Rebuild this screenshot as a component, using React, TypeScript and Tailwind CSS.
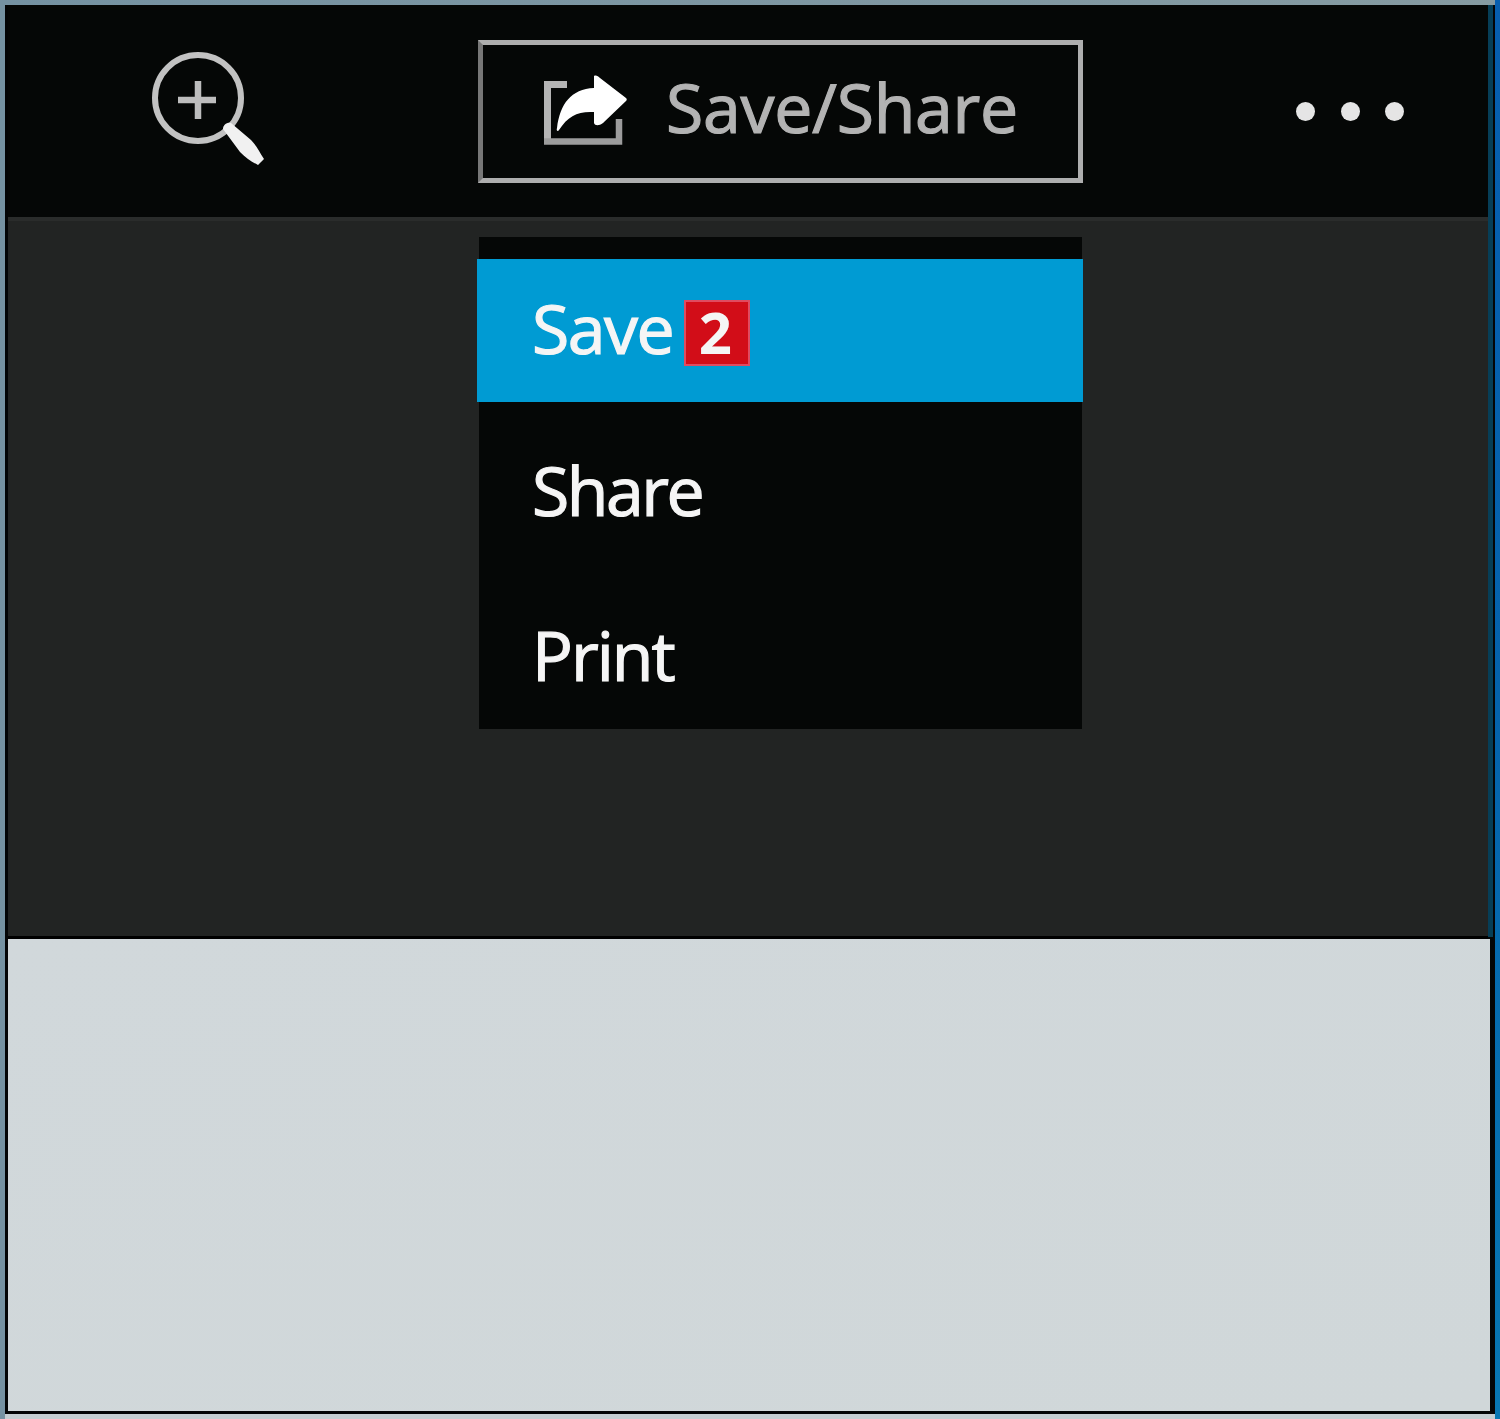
import React, { useState } from 'react';

const menuItems = [
  { label: 'Save', badge: '2', row: 'h-[143px] pb-[6px] tracking-[-1.500px]' },
  { label: 'Share', row: 'h-[163px] pt-[12px] tracking-[-2.500px]' },
  { label: 'Print', row: 'h-[164px] pt-[16px] tracking-[-2px]' },
];

function ZoomIcon() {
  return (
    <svg width="116" height="118" viewBox="0 0 116 118" fill="none">
      <circle cx="48" cy="48" r="43" stroke="#c2c2c2" strokeWidth="6" />
      <path d="M48 31v38M28 50h38" stroke="#bdbdbd" strokeWidth="6.500" />
      <path d="M73 79c0-4 4-7 8-6l20 17c5 5 8 11 13 19l-6 6c-6-3-12-7-18-13z" fill="#f1f1f1" />
    </svg>
  );
}

function ShareIcon() {
  return (
    <svg width="88" height="74" viewBox="0 0 88 74" fill="none">
      <path d="M26 9.500H6.500v57" stroke="#b4b4b4" strokeWidth="7" />
      <path d="M3 66.500h75V44" stroke="#9c9c9c" strokeWidth="6.500" />
      <path
        d="M53 1c2-1 4 0 6 2l26 20c1 1 1 2 0 3L62 48c-4 3-8 3-9 0V37c-16-1-26 4-35 18-1 2-3 1-2-2 3-24 14-39 37-40z"
        fill="#fff"
      />
    </svg>
  );
}

function Toolbar({ onToggle }: { onToggle: () => void }) {
  return (
    <header className="h-[212px] flex-shrink-0 bg-[#050706] flex items-start">
      <button className="ml-[142px] mt-[45px]">
        <ZoomIcon />
      </button>
      <button
        onClick={onToggle}
        className="ml-[212px] mt-[35px] w-[605px] h-[143px] flex items-center border-[5px] border-[#aeaeae] border-l-[#777]"
      >
        <span className="ml-[58px]">
          <ShareIcon />
        </span>
        <span className="ml-[37px] mb-[9px] text-[68px] leading-none tracking-[-0.300px] text-[#b3b3b3] [-webkit-text-stroke:1.200px_#b3b3b3]">
          Save/Share
        </span>
      </button>
      <button className="ml-[213px] mt-[97px] flex gap-[25.500px]">
        <span className="size-[19px] rounded-full bg-[#e5e5e5]" />
        <span className="size-[19px] rounded-full bg-[#e5e5e5]" />
        <span className="size-[19px] rounded-full bg-[#e5e5e5]" />
      </button>
    </header>
  );
}

function Menu({ activeIndex, onSelect }: { activeIndex: number, onSelect: (idx: number) => void }) {
  return (
    <nav className="ml-[471px] mt-[16px] w-[603px] h-[492px] pt-[22px] bg-[#050706] flex flex-col">
      {menuItems.map((item, idx) => (
        <button
          key={item.label}
          onClick={() => onSelect(idx)}
          className={`-ml-[2px] -mr-px pl-[55px] flex flex-shrink-0 items-center text-[68px] leading-none text-[#f5f5f5] ${item.row} ${
            activeIndex === idx ? 'bg-[#009bd3]' : ''
          }`}
        >
          <span className="[-webkit-text-stroke:1.200px_#f5f5f5]">{item.label}</span>
          {item.badge && (
            <span className="ml-[11px] mt-[11px] size-[66px] flex items-center justify-center border-2 border-[#e04b60] bg-[#d20d18] text-[58px] font-bold tracking-normal pr-1 pb-[3px]">
              {item.badge}
            </span>
          )}
        </button>
      ))}
    </nav>
  );
}

export default function App() {
  const [activeIndex, setActiveIndex] = useState(0);
  const [open, setOpen] = useState(true);

  return (
    <div className="w-[1500px] h-[1419px] flex overflow-hidden bg-[#7490a0] font-['Open_Sans','Noto_Sans',sans-serif]">
      <div className="w-[5px] flex-shrink-0 bg-[#7592a2]" />
      <div className="w-[1490px] flex flex-col">
        <div className="h-[5px] flex-shrink-0 bg-gradient-to-r from-[#7592a2] to-[#869ba2]" />
        <div className="h-[1409px] flex bg-[#030506]">
          <main className="ml-[3px] w-[1480px] flex flex-col">
            <Toolbar onToggle={() => setOpen(!open)} />
            <section className="h-[719px] flex-shrink-0 border-t-4 border-[#2a2c2b] bg-[#222423]">
              {open && <Menu activeIndex={activeIndex} onSelect={setActiveIndex} />}
            </section>
            <div className="h-[3px] flex-shrink-0 bg-black" />
            <section className="h-[472px] -mr-[2px] bg-gradient-to-br from-[#d1d8db] to-[#d0d7d9]" />
          </main>
          <div className="w-[5px] h-[932px] bg-[#063e57]" />
        </div>
        <div className="h-[5px] flex-shrink-0 bg-[#c5ced2]" />
      </div>
      <div className="w-[5px] flex-shrink-0 bg-gradient-to-b from-[#075eaf] via-[#0563ac] to-[#0877b3]" />
    </div>
  );
}
